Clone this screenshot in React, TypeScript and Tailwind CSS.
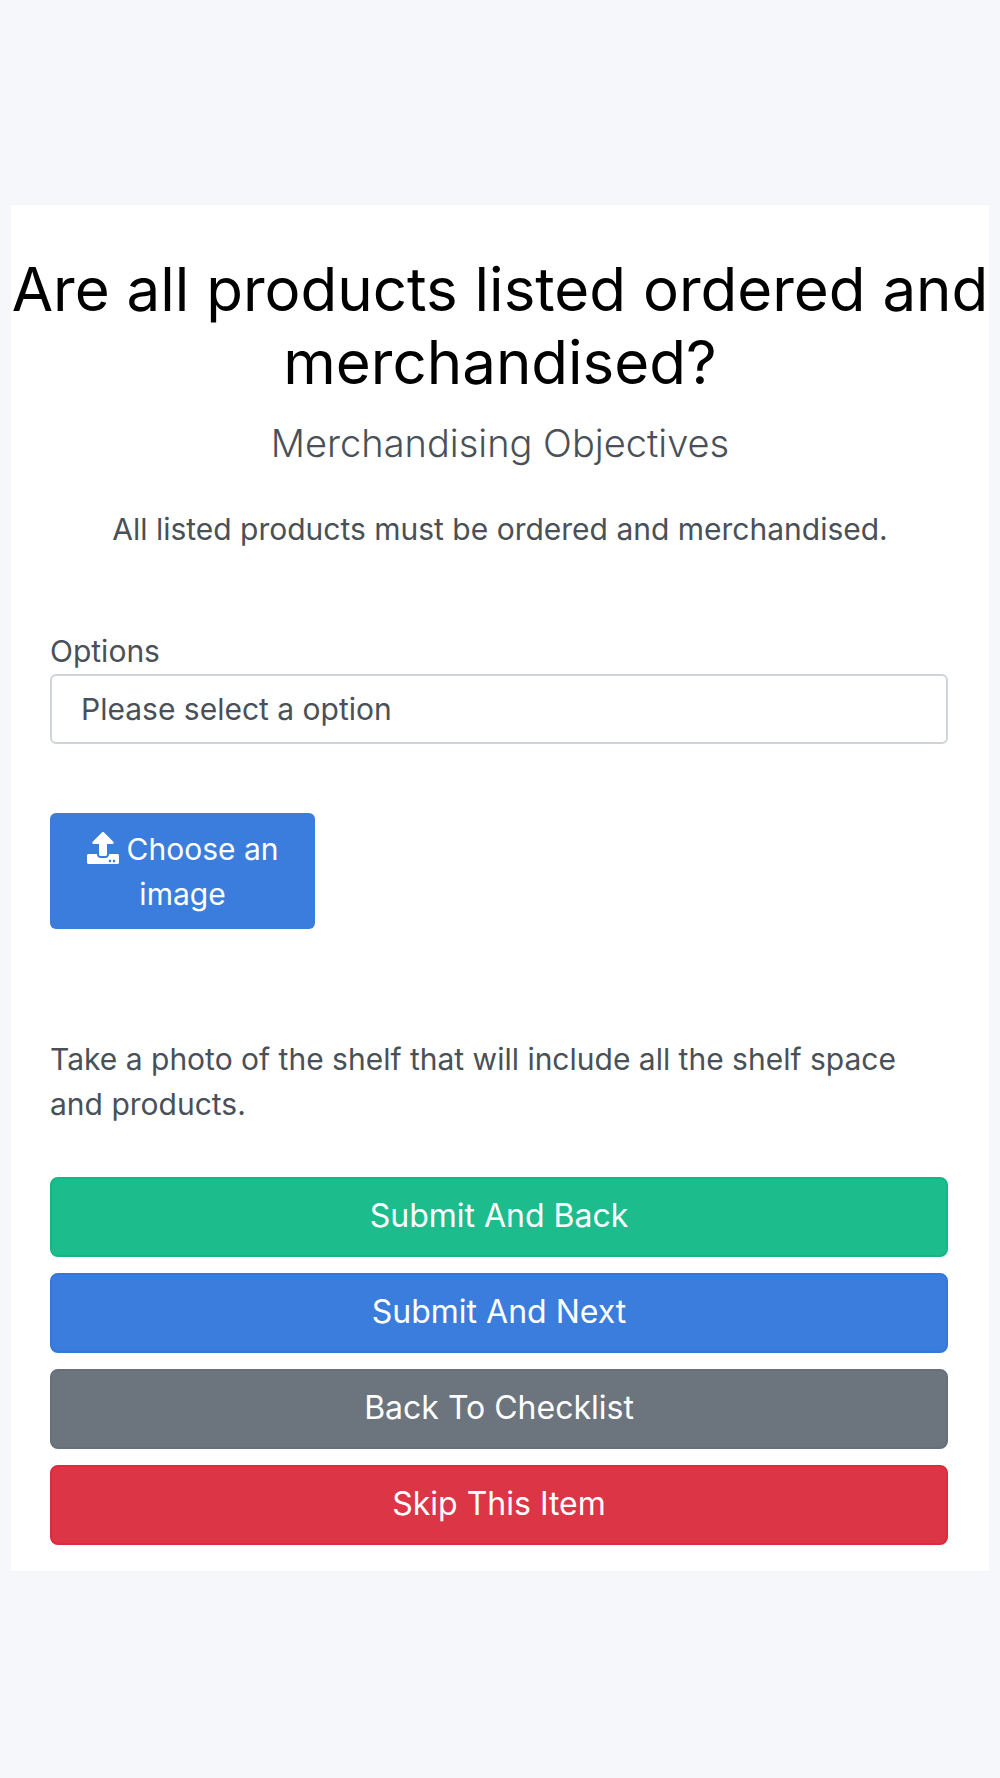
import { FaUpload } from "react-icons/fa";

const actions = [
  { label: "Submit And Back", tone: "bg-[#1dbc8c] border-[#15b685]" },
  { label: "Submit And Next", tone: "bg-[#3b7ddd] border-[#3277dc]" },
  { label: "Back To Checklist", tone: "bg-[#6c757d] border-[#667078]" },
  { label: "Skip This Item", tone: "bg-[#dc3545] border-[#da2c3d]" },
];

export default function App() {
  return (
    <main className="flex min-h-screen flex-col justify-center bg-[#f5f7fb] px-[11px] pb-0.5 font-[Inter,sans-serif] [font-optical-sizing:none] text-[30px] leading-[45px] text-[#495057]">
      <section className="bg-white pt-[48px] pb-[26px]">
        <header className="text-center">
          <h1 className="text-[60px] leading-[73px] font-normal text-black">
            Are all products listed ordered and merchandised?
          </h1>
          <p className="mt-[14px] text-[38px] leading-[60px] font-light">Merchandising Objectives</p>
          <p className="mt-[34px]">All listed products must be ordered and merchandised.</p>
        </header>

        <form className="mr-[41px] ml-[39px] mt-[77px]" onSubmit={(e) => e.preventDefault()}>
          <label htmlFor="options" className="block">
            Options
          </label>
          <select
            id="options"
            className="block h-[70px] w-full appearance-none rounded-md border-2 border-[#ced4da] bg-white px-[29px]"
          >
            <option>Please select a option</option>
          </select>

          <button type="button" className="mt-[69px] block w-[265px] rounded-md bg-[#3b7ddd] px-6 pt-[14px] pb-3 text-center text-white">
            <FaUpload className="mr-2 inline-block size-8 align-[-4px]" aria-hidden="true" />
            Choose an image
          </button>

          <p className="mt-[108px]">
            Take a photo of the shelf that will include all the shelf space and products.
          </p>

          <div className="mt-[50px] flex flex-col gap-4">
            {actions.map(({ label, tone }) => (
              <button key={label} type="button" className={`h-[80px] w-full rounded-lg border-2 pb-1 text-[32px] text-white ${tone}`}>
                {label}
              </button>
            ))}
          </div>
        </form>
      </section>
    </main>
  );
}
